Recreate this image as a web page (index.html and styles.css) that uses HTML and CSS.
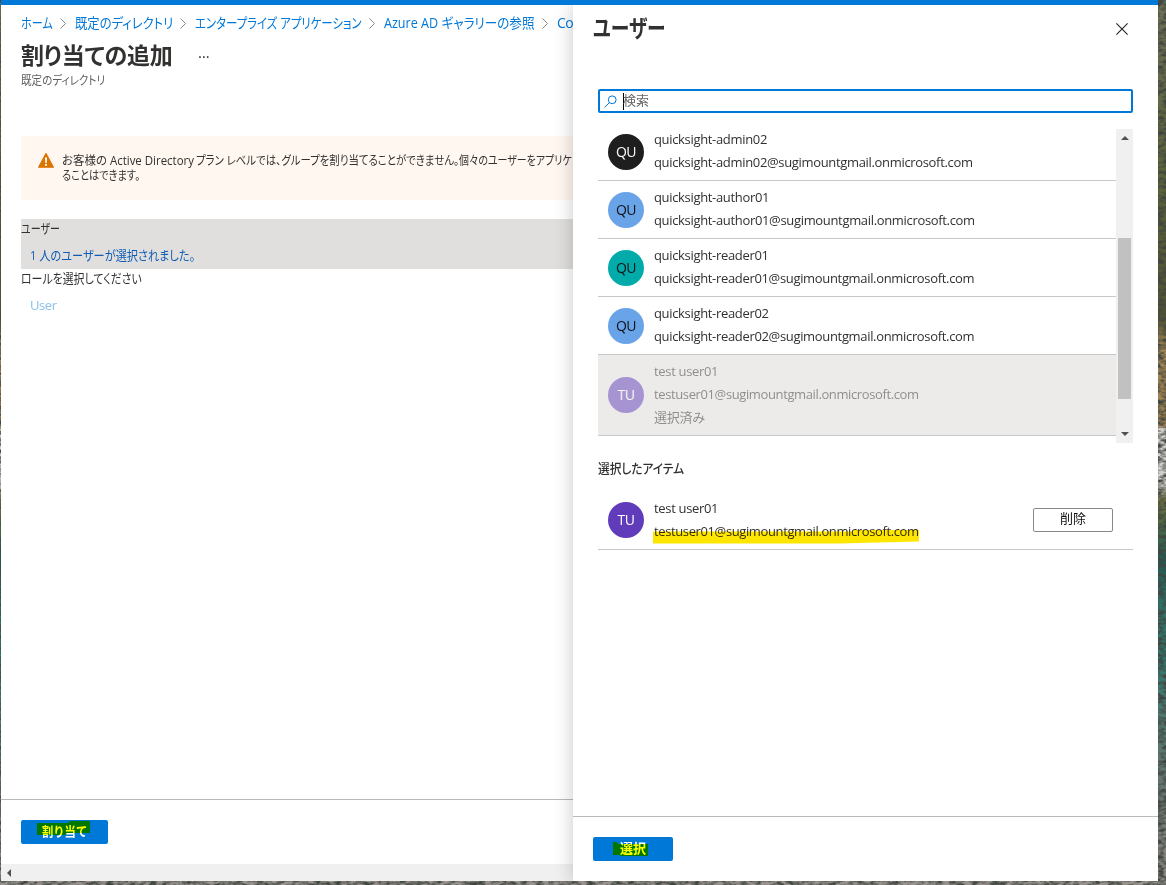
FILE: index.html
```html
<!DOCTYPE html>
<html lang="ja">
<head>
    <meta charset="UTF-8">
    <meta name="viewport" content="width=device-width, initial-scale=1.0">
    <title>割り当ての追加</title>
    <link rel="stylesheet" href="styles.css">
</head>
<body>
    <svg class="wallpaper" width="1166" height="885" aria-hidden="true">
        <filter id="grain" x="0" y="0" width="100%" height="100%">
            <feTurbulence type="fractalNoise" baseFrequency="0.14 0.28" numOctaves="3" seed="4"/>
            <feColorMatrix type="matrix" values="0 0 0 0 0.05  0 0 0 0 0.06  0 0 0 0 0.05  2.6 0 0 0 -0.9"/>
        </filter>
        <rect width="1166" height="885" filter="url(#grain)"/>
    </svg>

    <div class="window">
        <div class="page">
            <nav class="breadcrumb">
                <a class="narrow crumb-home">ホーム</a>
                <svg class="chevron" viewBox="0 0 6 11"><path d="M.5.5l5 5-5 5"/></svg>
                <a class="narrow crumb-dir">既定のディレクトリ</a>
                <svg class="chevron" viewBox="0 0 6 11"><path d="M.5.5l5 5-5 5"/></svg>
                <a class="narrow crumb-apps">エンタープライズ アプリケーション</a>
                <svg class="chevron" viewBox="0 0 6 11"><path d="M.5.5l5 5-5 5"/></svg>
                <a class="narrow crumb-gallery">Azure AD ギャラリーの参照</a>
                <svg class="chevron" viewBox="0 0 6 11"><path d="M.5.5l5 5-5 5"/></svg>
                <a class="crumb-last">Co</a>
            </nav>

            <div class="title-row">
                <h1>割り当ての追加</h1>
                <span class="more">…</span>
            </div>
            <p class="subtitle"><span class="narrow">既定のディレクトリ</span></p>

            <div class="notice">
                <svg class="warning" viewBox="0 0 16 15">
                    <path d="M8 .6 15.4 14.2H.6z" fill="#db7500" stroke="#db7500" stroke-width="1.2" stroke-linejoin="round"/>
                    <path d="M7 4.6h2L8.7 10H7.3z" fill="#fff"/>
                    <circle cx="8" cy="11.9" r="1.1" fill="#fff"/>
                </svg>
                <div>
                    <p class="notice-line">
                        <span class="narrow part-plan">お客様の Active Directory</span>
                        <span class="narrow part-group">プラン レベルでは、グループを割り当てることができません。</span>
                        <span class="narrow part-user">個々のユーザーをアプリケ</span>
                    </p>
                    <p><span class="narrow part-rest">ることはできます。</span></p>
                </div>
            </div>

            <div class="field active">
                <div class="field-label"><span class="narrow label-user">ユーザー</span></div>
                <a class="field-value"><span class="narrow value-user">1 人のユーザーが選択されました。</span></a>
            </div>
            <div class="field">
                <div class="field-label"><span class="narrow label-role">ロールを選択してください</span></div>
                <a class="field-value disabled">User</a>
            </div>

            <div class="page-footer">
                <button class="button assign"><span class="marker"><span class="narrow">割り当て</span></span></button>
            </div>
            <div class="hscroll">
                <svg viewBox="0 0 4 8" width="4" height="8"><path d="M4 0v8L0 4z" fill="#505050"/></svg>
            </div>
        </div>

        <div class="panel">
            <div class="panel-header">
                <h2><span class="narrow">ユーザー</span></h2>
                <svg class="close" viewBox="0 0 12 12"><path d="M.4.4l11.2 11.2M11.6.4L.4 11.6"/></svg>
            </div>

            <div class="panel-body">
                <div class="search">
                    <svg viewBox="0 0 13 13"><circle cx="8.2" cy="4.8" r="3.9"/><path d="M5.3 7.7L.6 12.4"/></svg>
                    <span class="caret"></span>
                    <span class="placeholder">検索</span>
                </div>

                <div class="list-box">
                    <div class="list">
                        <div class="row">
                            <div class="avatar black">QU</div>
                            <div class="info"><div>quicksight-admin02</div><div>quicksight-admin02@sugimountgmail.onmicrosoft.com</div></div>
                        </div>
                        <div class="row">
                            <div class="avatar blue">QU</div>
                            <div class="info"><div>quicksight-author01</div><div>quicksight-author01@sugimountgmail.onmicrosoft.com</div></div>
                        </div>
                        <div class="row">
                            <div class="avatar teal">QU</div>
                            <div class="info"><div>quicksight-reader01</div><div>quicksight-reader01@sugimountgmail.onmicrosoft.com</div></div>
                        </div>
                        <div class="row">
                            <div class="avatar blue">QU</div>
                            <div class="info"><div>quicksight-reader02</div><div>quicksight-reader02@sugimountgmail.onmicrosoft.com</div></div>
                        </div>
                        <div class="row selected">
                            <div class="avatar purple">TU</div>
                            <div class="info"><div>test user01</div><div class="address">testuser01@sugimountgmail.onmicrosoft.com</div><div class="status">選択済み</div></div>
                        </div>
                    </div>
                    <div class="vscroll">
                        <svg viewBox="0 0 8 4" width="8" height="4"><path d="M0 4h8L4 0z" fill="#505050"/></svg>
                        <div class="thumb"></div>
                        <svg viewBox="0 0 8 4" width="8" height="4"><path d="M0 0h8L4 4z" fill="#505050"/></svg>
                    </div>
                </div>

                <h3><span class="narrow">選択したアイテム</span></h3>
                <div class="row chosen">
                    <div class="avatar purple">TU</div>
                    <div class="info"><div>test user01</div><div class="address"><span class="marker email">testuser01@sugimountgmail.onmicrosoft.com</span></div></div>
                    <button class="remove">削除</button>
                </div>
            </div>

            <div class="panel-footer">
                <button class="button select"><span class="marker">選択</span></button>
            </div>
        </div>
    </div>
</body>
</html>
```
FILE: styles.css
```css
:root {
    --blue: #0078d7;
    --text: #323130;
    --line: #c8c8c8;
}

* {
    box-sizing: border-box;
}

body {
    margin: 0;
    width: 1166px;
    height: 885px;
    overflow: hidden;
    font-family: "Open Sans", "Noto Sans CJK JP", sans-serif;
    font-size: 13px;
    font-feature-settings: "palt";
    color: var(--text);
    background: linear-gradient(#6e7058 0, #5c6339 180px, #525333 320px, #a98a58 350px, #9c7d4e 425px, #dcd8d4 430px, #cecac8 485px, #757540 500px, #4c6a45 525px, #215b53 560px, #327268 610px, #327a70 660px, #527870 720px, #6a7571 800px, #9a938d 885px);
}

h1, h2, h3, p {
    margin: 0;
}

/* condensed kana: the box has the final width, the glyphs are scaled to it */
.narrow {
    display: inline-block;
    white-space: nowrap;
    transform-origin: 0 50%;
}

.wallpaper {
    position: absolute;
    left: 0;
    top: 0;
}

.window {
    position: relative;
    width: 1157px;
    height: 881px;
    margin-left: 1px;
    background-color: #fff;
    border-top: 5px solid var(--blue);
}

.page {
    display: flex;
    flex-direction: column;
    width: 572px;
    height: 876px;
    overflow: hidden;
    white-space: nowrap;
}

.breadcrumb {
    display: flex;
    align-items: center;
    height: 34px;
    padding-left: 20px;
    font-size: 14px;
    color: var(--blue);
}

.breadcrumb a {
    flex: none;
}

.crumb-home {
    width: 31px;
    transform: scaleX(0.79);
}

.crumb-dir {
    width: 97px;
    transform: scaleX(0.88);
}

.crumb-apps {
    width: 166px;
    transform: scaleX(0.815);
}

.crumb-gallery {
    width: 150px;
    transform: scaleX(0.9);
}

.crumb-last {
    letter-spacing: -0.5px;
}

.chevron {
    flex: none;
    width: 6px;
    height: 11px;
    margin: 3px 9px 0 8px;
    fill: none;
    stroke: #8a8886;
}

.title-row {
    display: flex;
    align-items: center;
    height: 33px;
    padding-left: 20px;
}

h1, h2 {
    font-size: 24px;
    font-weight: 600;
    line-height: 30px;
}

h1 {
    width: 176px;
    margin-top: -2px;
    font-size: 23px;
    letter-spacing: -0.2px;
}

h2 .narrow {
    transform: scaleX(0.78);
}

.more {
    margin: -7px 0 0 1px;
    font-size: 15px;
}

.subtitle {
    height: 64px;
    padding-left: 20px;
    font-size: 12px;
    line-height: 18px;
    color: #605e5c;
}

.subtitle .narrow {
    transform: scaleX(0.88);
}

.notice {
    display: flex;
    height: 64px;
    margin: 0 0 19px 20px;
    padding: 17px 0 0 17px;
    background-color: #fff7f0;
    font-size: 12px;
    line-height: 15px;
}

.notice-line {
    display: flex;
}

.part-plan {
    width: 134px;
    transform: scaleX(0.955);
}

.part-group {
    width: 263px;
    transform: scaleX(0.868);
}

.part-user {
    width: 114px;
    transform: scaleX(0.83);
}

.part-rest {
    transform: scaleX(0.85);
}

.warning {
    flex: none;
    width: 16px;
    height: 15px;
    margin-right: 8px;
}

.field {
    height: 50px;
    margin-left: 20px;
}

.field.active {
    background-color: #e1dfdd;
}

.field-label {
    height: 18px;
    line-height: 18px;
}

.field-value {
    display: block;
    padding-left: 9px;
    line-height: 36px;
    color: #0f5db4;
}

.field-value.disabled {
    color: #8ac0ec;
    letter-spacing: -0.4px;
}

.label-user {
    transform: scaleX(0.77);
}

.label-role {
    transform: scaleX(0.84);
}

.value-user {
    transform: scaleX(0.86);
}

.page-footer {
    height: 65px;
    margin-top: auto;
    padding: 20px;
    border-top: 1px solid #b9b9b9;
}

.button {
    display: flex;
    align-items: center;
    justify-content: center;
    height: 24px;
    padding: 0 0 2px;
    border: none;
    border-radius: 2px;
    background-color: var(--blue);
    color: #fff;
    font: 600 13px/18px "Open Sans", "Noto Sans CJK JP", sans-serif;
}

.assign {
    width: 87px;
}

.assign .marker {
    width: 45px;
}

.assign .narrow {
    transform: scaleX(0.87);
}

.select {
    width: 80px;
}

/* highlighter strokes darken whatever they cover */
.marker {
    position: relative;
}

.marker::after {
    content: "";
    position: absolute;
    background-color: #ffe600;
    mix-blend-mode: multiply;
}

.assign .marker::after {
    left: -5px;
    top: -1px;
    width: 53px;
    height: 14px;
    background-color: #ffff00;
    clip-path: polygon(0 2px, 30px 2px, 34px 0, 100% 0, 100% 12px, 30px 12px, 28px 14px, 0 14px);
}

.select .marker::after {
    left: -7px;
    top: 3px;
    width: 35px;
    height: 14px;
    background-color: #ffff00;
    clip-path: polygon(0 0, 4px 0, 5px 2px, 100% 2px, 100% 14px, 8px 14px, 6px 13px, 0 13px);
}

.email::after {
    left: -1px;
    top: 8px;
    width: 266px;
    height: 14px;
    clip-path: polygon(0 2px, 200px 2px, 201px 0, 100% 0, 100% 12px, 70% 14px, 0 14px);
}

.hscroll {
    display: flex;
    align-items: center;
    flex: none;
    height: 17px;
    padding-left: 6px;
    background-color: #f0f0f0;
}

.panel {
    position: absolute;
    left: 572px;
    top: 0;
    display: flex;
    flex-direction: column;
    width: 585px;
    height: 876px;
    background-color: #fff;
    box-shadow: 0 0 18px rgba(0, 0, 0, 0.22);
    clip-path: inset(0 0 0 -30px);
}

.panel-header {
    display: flex;
    justify-content: space-between;
    height: 84px;
    padding: 8px 30px 0 20px;
}

.close {
    width: 12px;
    height: 12px;
    margin-top: 10px;
    stroke: #222;
    stroke-width: 1.1;
}

.panel-body {
    flex: 1;
    padding: 0 25px;
}

.search {
    display: flex;
    align-items: center;
    height: 24px;
    padding-left: 4px;
    border: 2px solid var(--blue);
    border-radius: 2px;
    color: #666;
}

.search svg {
    width: 13px;
    height: 13px;
    margin-right: 6px;
    fill: none;
    stroke: var(--blue);
}

.caret {
    width: 1px;
    height: 17px;
    background-color: #000;
}

.placeholder {
    margin: -3px 0 0 -1px;
}

.list-box {
    display: flex;
    height: 314px;
    margin-top: 16px;
    overflow: hidden;
}

/* the list is scrolled a few pixels past its first visible row */
.list {
    flex: 1;
    margin-top: -6px;
}

.row {
    display: flex;
    align-items: center;
    height: 58px;
    padding-left: 10px;
    border-bottom: 1px solid var(--line);
}

.info {
    margin-top: -2px;
    line-height: 23px;
    letter-spacing: -0.33px;
}

.address {
    letter-spacing: -0.38px;
}

.status {
    letter-spacing: -0.2px;
}

.avatar {
    width: 36px;
    height: 36px;
    margin-right: 10px;
    border-radius: 50%;
    font-size: 14px;
    line-height: 36px;
    letter-spacing: -0.5px;
    text-align: center;
}

.black {
    background-color: #1e1e1e;
    color: #fff;
}

.blue {
    background-color: #69a3e8;
    color: #111;
}

.teal {
    background-color: #00aba9;
    color: #111;
}

.purple {
    background-color: #603cba;
    color: #fff;
}

.selected {
    height: 81px;
    background-color: #edebe9;
}

.selected .avatar, .selected .info {
    opacity: 0.5;
}

.chosen {
    padding-bottom: 1px;
}

.chosen .info {
    margin-top: -1px;
}

.vscroll {
    display: flex;
    flex-direction: column;
    align-items: center;
    width: 17px;
    padding: 7px 0 7px;
    background-color: #f0f0f0;
}

.thumb {
    width: 13px;
    height: 161px;
    margin: 98px 0 auto;
    background-color: #c1c1c1;
}

h3 {
    height: 49px;
    font-size: 13px;
    font-weight: 500;
    line-height: 50px;
}

h3 .narrow {
    transform: scaleX(0.9);
}

.remove {
    width: 80px;
    height: 24px;
    margin: 0 20px 0 auto;
    padding: 0 0 4px;
    border: 1px solid #8a8886;
    border-radius: 2px;
    background-color: #fff;
    color: #111;
    font: 13px/18px "Open Sans", "Noto Sans CJK JP", sans-serif;
}

.panel-footer {
    height: 65px;
    padding: 20px;
    border-top: 1px solid #b9b9b9;
}
```
